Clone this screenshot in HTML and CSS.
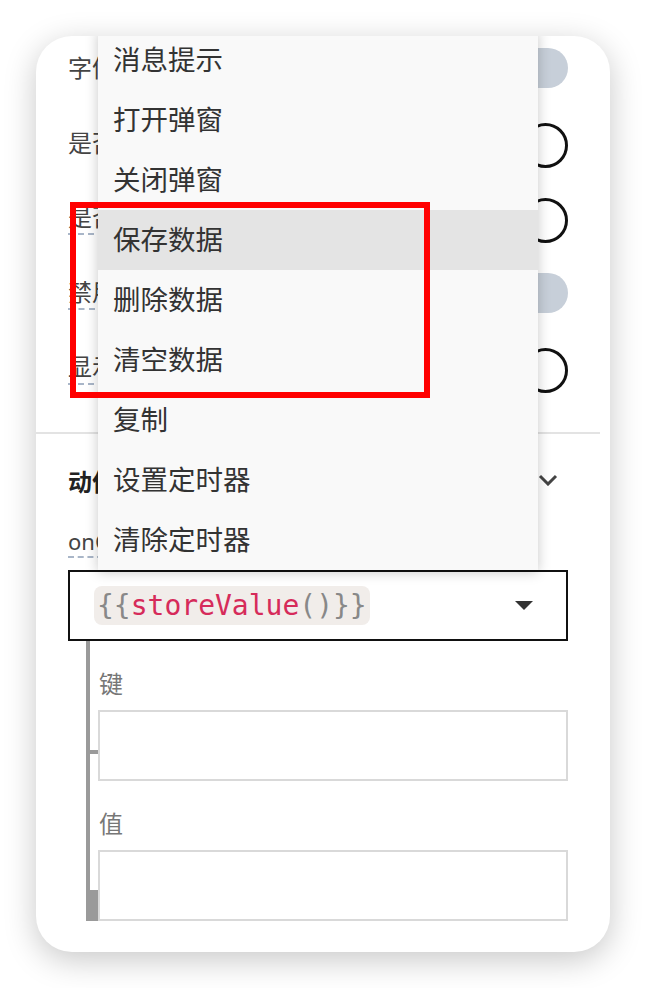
FILE: index.html
```html
<!DOCTYPE html>
<html lang="zh-CN">
<head>
    <meta charset="UTF-8">
    <meta name="viewport" content="width=device-width, initial-scale=1.0">
    <title>组件属性</title>
    <link rel="stylesheet" href="styles.css">
</head>
<body>
    <main class="wrap">
        <div class="panel">
            <div class="panel-body">
                <section class="props">
                    <div class="prop-row">
                        <span class="prop-label">字体加粗</span>
                        <span class="switch switch-off"></span>
                    </div>
                    <div class="prop-row">
                        <span class="prop-label">是否隐藏</span>
                        <span class="switch switch-ring"></span>
                    </div>
                    <div class="prop-row">
                        <span class="prop-label has-tip">是否只读</span>
                        <span class="switch switch-ring"></span>
                    </div>
                    <div class="prop-row">
                        <span class="prop-label has-tip">禁用</span>
                        <span class="switch switch-off"></span>
                    </div>
                    <div class="prop-row">
                        <span class="prop-label has-tip">显示边框</span>
                        <span class="switch switch-ring"></span>
                    </div>
                </section>

                <hr class="divider">

                <section class="actions">
                    <div class="section-head">
                        <h2>动作</h2>
                        <svg class="chevron" width="20" height="12" viewBox="0 0 20 12">
                            <polyline points="2,2 10,10 18,2" fill="none" stroke="#444" stroke-width="3"/>
                        </svg>
                    </div>
                    <div class="event-label"><span class="has-tip">onClick</span></div>
                    <div class="action-select">
                        <code class="chip"><span class="punc">{{</span><span class="fn">storeValue</span><span class="punc">()</span><span class="punc">}}</span></code>
                        <span class="caret"></span>
                    </div>
                    <div class="action-args">
                        <div class="arg">
                            <div class="arg-label">键</div>
                            <div class="arg-input"></div>
                        </div>
                        <div class="arg">
                            <div class="arg-label">值</div>
                            <div class="arg-input"></div>
                        </div>
                    </div>
                </section>
            </div>

            <ul class="menu">
                <li>消息提示</li>
                <li>打开弹窗</li>
                <li>关闭弹窗</li>
                <li class="active">保存数据</li>
                <li>删除数据</li>
                <li>清空数据</li>
                <li>复制</li>
                <li>设置定时器</li>
                <li>清除定时器</li>
            </ul>
        </div>
        <div class="mark"></div>
    </main>
</body>
</html>
```

FILE: styles.css
```css
* {
    box-sizing: border-box;
}

body {
    margin: 0;
    background: #fff;
    font-family: "Noto Sans", "Noto Sans CJK SC", sans-serif;
    color: #444;
}

.wrap {
    position: relative;
    padding: 36px;
}

.panel {
    position: relative;
    width: 574px;
    height: 916px;
    background: #fff;
    border-radius: 36px;
    overflow: hidden;
    box-shadow: 0 8px 32px rgba(0, 0, 0, 0.22);
}

.panel-body {
    padding: 0 42px 0 32px;
}

/* list is scrolled a little, first row sits under the top edge */
.props {
    margin-top: -6px;
}

.prop-row {
    display: flex;
    align-items: center;
    justify-content: space-between;
    height: 75px;
}

.prop-label {
    font-size: 24px;
    line-height: 32px;
    color: #444;
}

.has-tip {
    border-bottom: 2px dashed #a9b6c8;
}

.switch {
    display: flex;
    justify-content: flex-end;
    width: 64px;
    height: 40px;
    border-radius: 20px;
}

.switch-off {
    background: #c7cfd9;
}

.switch-ring::after {
    content: "";
    width: 39px;
    height: 39px;
    border: 3px solid #111;
    border-radius: 50%;
    background: #fff;
}

.divider {
    margin: 27px -32px 0;
    border: 0;
    border-top: 2px solid #e3e3e3;
}

.section-head {
    display: flex;
    align-items: center;
    justify-content: space-between;
    height: 92px;
}

.section-head h2 {
    margin: 0;
    font-size: 24px;
    font-weight: 700;
    color: #222;
}

.chevron {
    margin-right: 10px;
}

.event-label {
    font-size: 22px;
    line-height: 30px;
    color: #444;
    margin-bottom: 14px;
}

.action-select {
    display: flex;
    align-items: center;
    justify-content: space-between;
    height: 71px;
    padding: 0 33px 0 24px;
    border: 2px solid #111;
}

.chip {
    display: inline-flex;
    align-items: center;
    height: 39px;
    padding: 0 3px;
    border-radius: 8px;
    background: #f1edea;
    font-family: "DejaVu Sans Mono", monospace;
    font-size: 28px;
}

.chip .punc {
    color: #888;
}

.chip .fn {
    color: #d62b5a;
}

.caret {
    width: 0;
    height: 0;
    border-left: 9px solid transparent;
    border-right: 9px solid transparent;
    border-top: 9px solid #333;
}

.action-args {
    margin-left: 18px;
    padding-left: 8px;
    border-left: 4px solid #9a9a9a;
}

.arg-label {
    padding: 26px 0 0 1px;
    margin-bottom: 9px;
    font-size: 24px;
    line-height: 34px;
    color: #777;
}

.arg-input {
    position: relative;
    height: 71px;
    border: 2px solid #d9d9d9;
    background: #fff;
}

/* tree connector from the left rail */
.arg-input::before {
    content: "";
    position: absolute;
    left: -10px;
    top: 38px;
    width: 8px;
    height: 4px;
    background: #9a9a9a;
}

.arg:last-child .arg-input::before {
    height: auto;
    bottom: -2px;
}

.menu {
    position: absolute;
    left: 62px;
    top: -6px;
    width: 440px;
    margin: 0;
    padding: 0;
    list-style: none;
    background: #f9f9f9;
    box-shadow: 0 2px 12px rgba(0, 0, 0, 0.22);
}

.menu li {
    height: 60px;
    padding: 0 15px;
    font-size: 27.5px;
    line-height: 60px;
    color: #333;
}

.menu li.active {
    background: #e4e4e4;
}

.mark {
    position: absolute;
    left: 70px;
    top: 202px;
    width: 360px;
    height: 196px;
    border: 6px solid #ff0000;
}
```
